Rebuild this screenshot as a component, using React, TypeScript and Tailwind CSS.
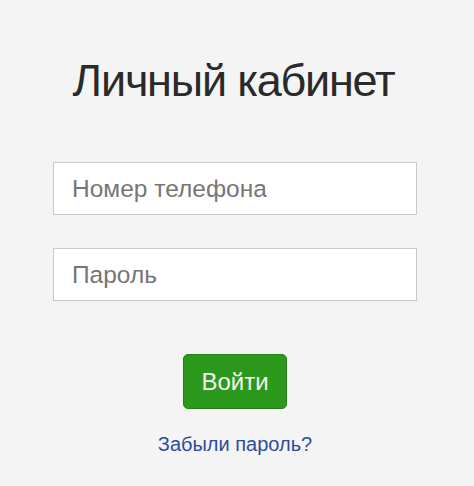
export default function App() {
  return (
    <div className="min-h-[486px] w-full bg-[#f4f4f4] font-['Liberation_Sans',Arial,sans-serif] flex flex-col items-center pt-[57px] pr-[4px]">
      <h1 className="text-[45px] leading-[48px] tracking-[-1.2px] text-[#2a2a2a] font-normal mr-[3px]">
        Личный кабинет
      </h1>

      <form className="flex flex-col items-center mt-[57px]" onSubmit={(e) => e.preventDefault()}>
        <input
          type="tel"
          placeholder="Номер телефона"
          className="w-[364px] h-[53px] bg-white border border-[#c9c9c9] px-[18px] text-[24.5px] text-[#333] placeholder:text-[#767676] outline-none"
        />
        <input
          type="password"
          placeholder="Пароль"
          className="w-[364px] h-[53px] mt-[33px] bg-white border border-[#c9c9c9] px-[18px] text-[24.5px] text-[#333] placeholder:text-[#767676] outline-none"
        />
        <button
          type="submit"
          className="mt-[53px] w-[104px] h-[55px] rounded-[5px] bg-[#2b991c] border border-[#237f16] text-[#f4f4f4] text-[24px]"
        >
          Войти
        </button>
      </form>

      <a href="#" className="mt-[23px] text-[20px] leading-[24px] text-[#2d4b9b]">
        Забыли пароль?
      </a>
    </div>
  );
}
